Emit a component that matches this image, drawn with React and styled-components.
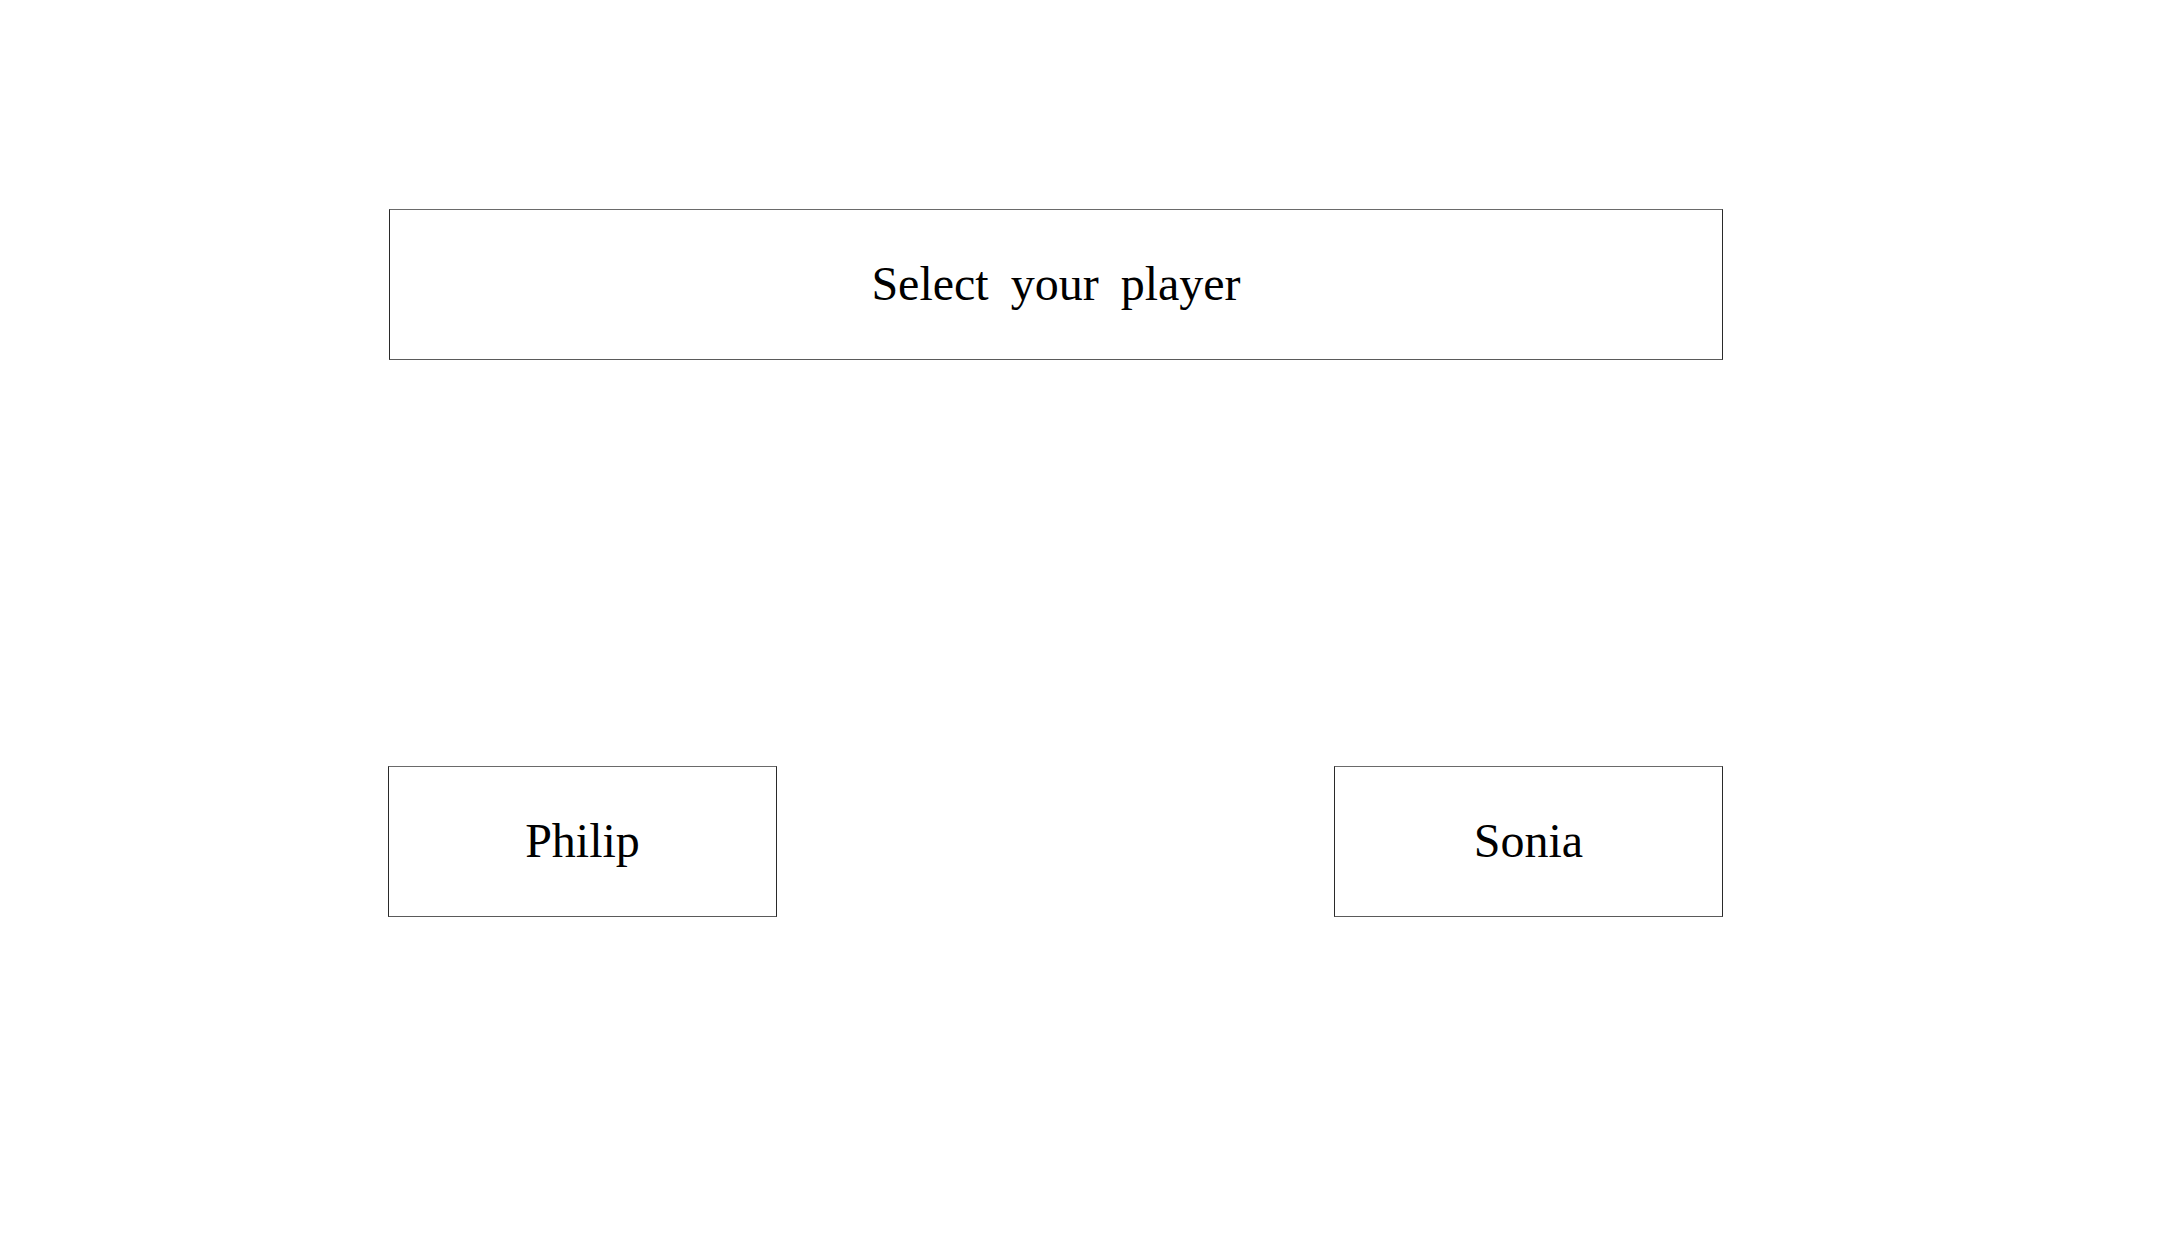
import styled, { createGlobalStyle } from "styled-components";

const GlobalStyle = createGlobalStyle`
  body {
    margin: 0;
    background: #ffffff;
    font-family: "Liberation Serif", serif;
    color: #000000;
  }
`;

const StyledPage = styled.div`
  display: flex;
  flex-direction: column;
  width: 1334px;
  padding: 209px 0 0 389px;
  gap: 406px;
`;

const StyledBox = styled.div`
  display: flex;
  align-items: center;
  justify-content: center;
  box-sizing: border-box;
  width: ${({ wide }) => (wide ? "1334px" : "389px")};
  height: 151px;
  padding-bottom: 3px;
  border: 1px solid #2a2a2a;
  border-top-color: #6a6a6a;
  border-bottom-color: #5a5a5a;
  font-size: 48px;
  word-spacing: 10px;
  cursor: ${({ wide }) => (wide ? "default" : "pointer")};
`;

const StyledRow = styled.div`
  display: flex;
  justify-content: space-between;
  margin-left: -1px;
`;

function App() {
  const players = ["Philip", "Sonia"];

  return (
    <>
      <GlobalStyle />
      <StyledPage>
        <StyledBox wide>Select your player</StyledBox>
        <StyledRow>
          {players.map((player) => (
            <StyledBox key={player}>{player}</StyledBox>
          ))}
        </StyledRow>
      </StyledPage>
    </>
  );
}

export default App;
